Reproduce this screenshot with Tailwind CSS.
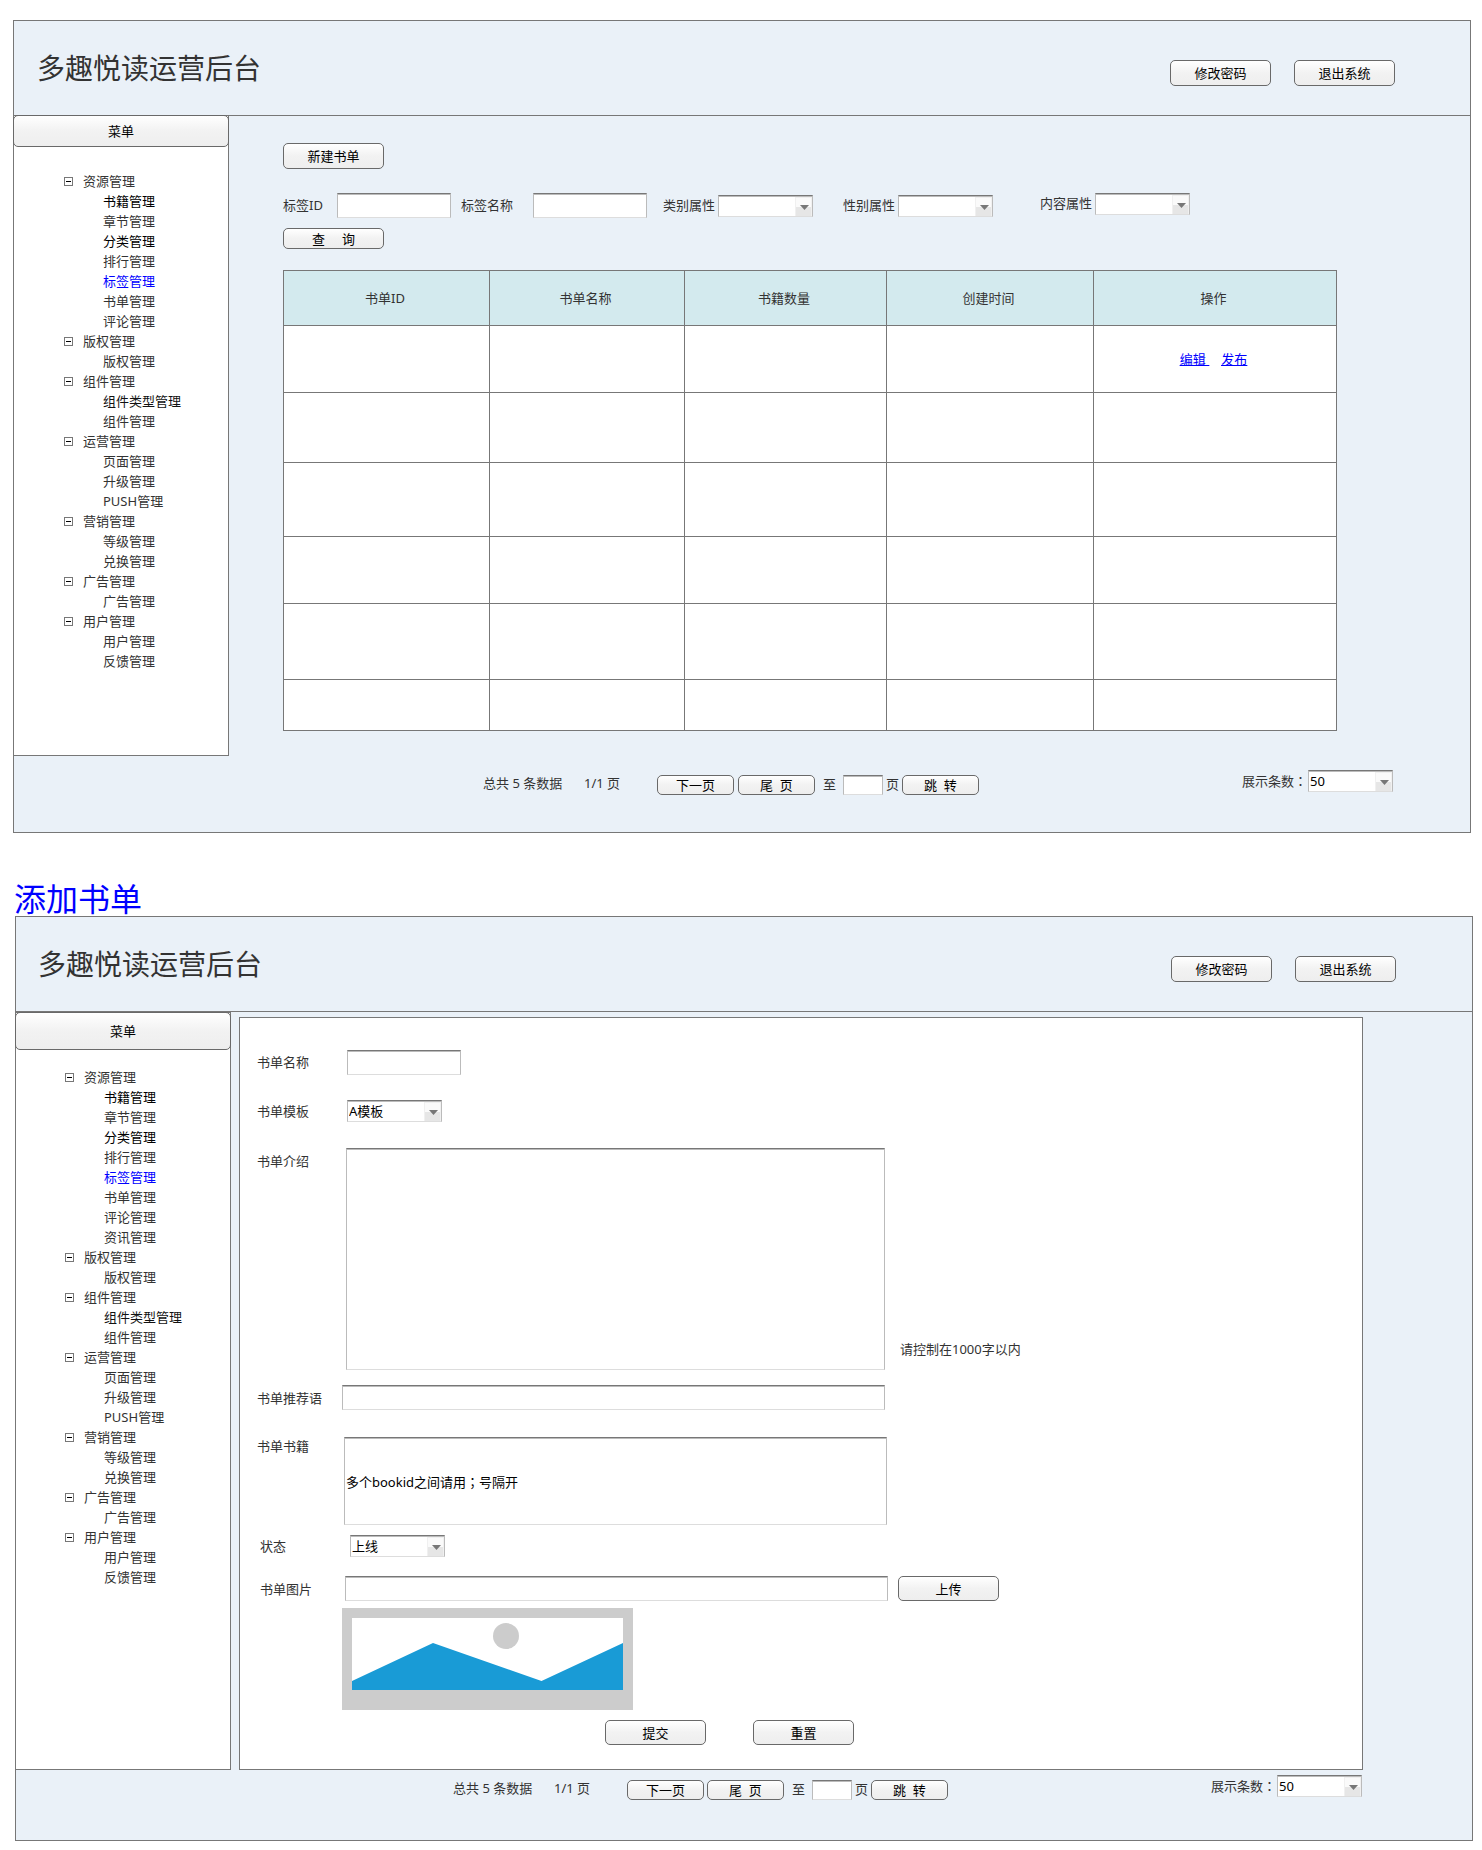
<!DOCTYPE html>
<html lang="zh-CN">
<head>
<meta charset="utf-8">
<meta name="viewport" content="width=device-width, initial-scale=1">
<title>多趣悦读运营后台</title>
<script src="https://cdn.jsdelivr.net/npm/@tailwindcss/browser@4"></script>
</head>
<body class="bg-white pt-5 pb-2 font-['Noto_Sans','Noto_Sans_CJK_SC',sans-serif] text-[13px] leading-5 text-[#333] [&_button]:rounded-[5px] [&_button]:border [&_button]:border-[#696969] [&_button]:bg-linear-to-b [&_button]:from-white [&_button]:via-[#f2f2f2] [&_button]:to-[#eee] [&_button]:whitespace-pre [&_button]:text-black [&_button]:leading-4 [&_:is(input,select,textarea)]:block [&_:is(input,select,textarea)]:appearance-none [&_:is(input,select,textarea)]:rounded-none [&_:is(input,select,textarea)]:border [&_:is(input,select,textarea)]:border-[#bbb] [&_:is(input,select,textarea)]:border-t-[#777] [&_:is(input,select,textarea)]:border-b-[#ddd] [&_:is(input,select,textarea)]:bg-white [&_:is(input,select,textarea)]:px-px [&_:is(input,select,textarea)]:text-black [&_:is(input,select,textarea)]:shadow-[inset_0_1px_0_#bbb]">

<svg class="hidden" aria-hidden="true">
  <symbol id="collapse" viewBox="0 0 9 9"><rect x=".5" y=".5" width="8" height="8" fill="#fff" stroke="#777"/><path d="M2 4.5h5" stroke="#000"/></symbol>
  <symbol id="drop" viewBox="0 0 17 19"><path d="M0 0h17v19H0z" fill="#f0f0f0"/><path d="M1 1h15v9H1z" fill="#fafafa"/><path d="M1 10h15v9H1z" fill="#e6e6e6"/><path d="M5 8h9l-4.500 5z" fill="#777"/></symbol>
</svg>

<section class="mr-[11px] ml-[13px] border border-[#777] bg-[#eaf1f8]">
  <header class="flex h-[95px] justify-between border-b border-[#777] pr-[75px] pl-[23px]">
    <h1 class="self-center text-[28px] leading-9">多趣悦读运营后台</h1>
    <div class="flex gap-[23px] pt-[39px]">
      <button class="h-[26px] w-[101px]">修改密码</button>
      <button class="h-[26px] w-[101px]">退出系统</button>
    </div>
  </header>
  <div class="flex items-start">
    <aside class="-mt-px -ml-px min-h-[641px] w-[216px] shrink-0 border border-[#777] bg-white">
      <button class="-m-px block h-8 w-[216px]">菜单</button>
      <nav class="pt-[25px] pl-[50px] [&_a]:block [&_h2]:flex [&_h2]:items-center [&_h2]:gap-[10px] [&_svg]:size-[9px] [&_ul]:pl-[39px]">
        <h2><svg><use href="#collapse"/></svg>资源管理</h2>
        <ul>
          <li><a href="#" class="text-black">书籍管理</a></li>
          <li><a href="#">章节管理</a></li>
          <li><a href="#" class="text-black">分类管理</a></li>
          <li><a href="#">排行管理</a></li>
          <li><a href="#" class="text-[#00f]">标签管理</a></li>
          <li><a href="#">书单管理</a></li>
          <li><a href="#">评论管理</a></li>
        </ul>
        <h2><svg><use href="#collapse"/></svg>版权管理</h2>
        <ul><li><a href="#">版权管理</a></li></ul>
        <h2><svg><use href="#collapse"/></svg>组件管理</h2>
        <ul>
          <li><a href="#" class="text-[#111]">组件类型管理</a></li>
          <li><a href="#">组件管理</a></li>
        </ul>
        <h2><svg><use href="#collapse"/></svg>运营管理</h2>
        <ul>
          <li><a href="#">页面管理</a></li>
          <li><a href="#">升级管理</a></li>
          <li><a href="#">PUSH管理</a></li>
        </ul>
        <h2><svg><use href="#collapse"/></svg>营销管理</h2>
        <ul>
          <li><a href="#">等级管理</a></li>
          <li><a href="#">兑换管理</a></li>
        </ul>
        <h2><svg><use href="#collapse"/></svg>广告管理</h2>
        <ul><li><a href="#">广告管理</a></li></ul>
        <h2><svg><use href="#collapse"/></svg>用户管理</h2>
        <ul>
          <li><a href="#">用户管理</a></li>
          <li><a href="#">反馈管理</a></li>
        </ul>
      </nav>
    </aside>

    <main class="flex-1 pt-[27px] pr-[77px] pb-[37px] pl-[54px]">
      <button class="block h-[26px] w-[101px]">新建书单</button>
      <form class="mt-6">
        <div class="flex h-[25px] items-center [&_label]:pb-[2px]">
          <label for="tag-id" class="w-[54px]">标签ID</label>
          <input id="tag-id" type="text" class="h-[25px] w-[114px]">
          <label for="tag-name" class="ml-[10px] w-[72px]">标签名称</label>
          <input id="tag-name" type="text" class="h-[25px] w-[114px]">
          <label for="category" class="ml-4 w-[55px]">类别属性</label>
          <div class="relative">
            <select id="category" class="h-[22px] w-[95px]"><option></option></select>
            <svg class="pointer-events-none absolute top-[2px] right-px h-[19px] w-[17px]"><use href="#drop"/></svg>
          </div>
          <label for="gender" class="ml-[30px] w-[55px]">性别属性</label>
          <div class="relative">
            <select id="gender" class="h-[22px] w-[95px]"><option></option></select>
            <svg class="pointer-events-none absolute top-[2px] right-px h-[19px] w-[17px]"><use href="#drop"/></svg>
          </div>
          <div class="ml-[47px] flex items-center self-start">
            <label for="content" class="w-[55px]">内容属性</label>
            <div class="relative">
              <select id="content" class="h-[22px] w-[95px]"><option></option></select>
              <svg class="pointer-events-none absolute top-[2px] right-px h-[19px] w-[17px]"><use href="#drop"/></svg>
            </div>
          </div>
        </div>
        <button type="button" class="mt-[10px] block h-[21px] w-[101px]">查&nbsp;&nbsp;&nbsp;&nbsp;&nbsp;询</button>
      </form>

      <div class="mt-[21px] mr-[56px]">
        <table class="w-full table-fixed border-collapse bg-white text-center [&_:is(td,th)]:border [&_:is(td,th)]:border-[#777]">
          <colgroup><col class="w-[206px]"><col class="w-[195px]"><col class="w-[202px]"><col class="w-[207px]"><col></colgroup>
          <thead>
            <tr class="h-[55px] bg-[#d3eaee] [&>th]:pr-[3px] [&>th]:font-normal"><th>书单ID</th><th>书单名称</th><th>书籍数量</th><th>创建时间</th><th>操作</th></tr>
          </thead>
          <tbody>
            <tr class="h-[67px]"><td></td><td></td><td></td><td></td><td class="pr-[3px]"><div class="flex justify-center gap-3 text-[#00f] underline"><a href="#">编辑&nbsp;</a><a href="#">发布</a></div></td></tr>
            <tr class="h-[70px]"><td></td><td></td><td></td><td></td><td></td></tr>
            <tr class="h-[74px]"><td></td><td></td><td></td><td></td><td></td></tr>
            <tr class="h-[67px]"><td></td><td></td><td></td><td></td><td></td></tr>
            <tr class="h-[76px]"><td></td><td></td><td></td><td></td><td></td></tr>
            <tr class="h-[51px]"><td></td><td></td><td></td><td></td><td></td></tr>
          </tbody>
        </table>
      </div>

      <footer class="mt-[39px] ml-[200px] flex h-[25px] justify-between">
        <div class="flex items-center self-end">
          <p class="flex w-[174px] self-start leading-4"><span class="w-[101px]">总共 5 条数据</span><span>1/1 页</span></p>
          <button class="mr-1 h-5 w-[77px]">下一页</button>
          <button class="mr-2 h-5 w-[77px]">尾&nbsp;&nbsp;页</button>
          <label for="page-a" class="w-5 self-start leading-[18px]">至</label>
          <input id="page-a" type="text" class="mr-[3px] h-5 w-10">
          <span class="w-4 self-start leading-[18px]">页</span>
          <button class="h-5 w-[77px]">跳&nbsp;&nbsp;转</button>
        </div>
        <div class="flex items-center self-start">
          <label for="size-a" class="w-[66px] font-['Noto_Sans_CJK_TC','Noto_Sans_CJK_SC',sans-serif]" lang="zh-TW">展示条数：</label>
          <div class="relative">
            <select id="size-a" class="h-[22px] w-[85px]"><option>50</option></select>
            <svg class="pointer-events-none absolute top-[2px] right-px h-[19px] w-[17px]"><use href="#drop"/></svg>
          </div>
        </div>
      </footer>
    </main>
  </div>
</section>

<h2 class="mt-[49px] ml-[14px] text-[32px] leading-[34px] text-[#00f]">添加书单</h2>

<section class="mr-[9px] ml-[15px] border border-[#777] bg-[#eaf1f8]">
  <header class="flex h-[95px] justify-between border-b border-[#777] pr-[76px] pl-[22px]">
    <h1 class="self-center text-[28px] leading-9">多趣悦读运营后台</h1>
    <div class="flex gap-[23px] pt-[39px]">
      <button class="h-[26px] w-[101px]">修改密码</button>
      <button class="h-[26px] w-[101px]">退出系统</button>
    </div>
  </header>
  <div class="flex items-start">
    <aside class="-ml-px min-h-[758px] w-[216px] shrink-0 border border-[#777] bg-white">
      <button class="-m-px block h-[38px] w-[216px]">菜单</button>
      <nav class="pt-[18px] pl-[49px] [&_a]:block [&_h2]:flex [&_h2]:items-center [&_h2]:gap-[10px] [&_svg]:size-[9px] [&_ul]:pl-[39px]">
        <h2><svg><use href="#collapse"/></svg>资源管理</h2>
        <ul>
          <li><a href="#" class="text-black">书籍管理</a></li>
          <li><a href="#">章节管理</a></li>
          <li><a href="#" class="text-black">分类管理</a></li>
          <li><a href="#">排行管理</a></li>
          <li><a href="#" class="text-[#00f]">标签管理</a></li>
          <li><a href="#">书单管理</a></li>
          <li><a href="#">评论管理</a></li>
          <li><a href="#">资讯管理</a></li>
        </ul>
        <h2><svg><use href="#collapse"/></svg>版权管理</h2>
        <ul><li><a href="#">版权管理</a></li></ul>
        <h2><svg><use href="#collapse"/></svg>组件管理</h2>
        <ul>
          <li><a href="#" class="text-[#111]">组件类型管理</a></li>
          <li><a href="#">组件管理</a></li>
        </ul>
        <h2><svg><use href="#collapse"/></svg>运营管理</h2>
        <ul>
          <li><a href="#">页面管理</a></li>
          <li><a href="#">升级管理</a></li>
          <li><a href="#">PUSH管理</a></li>
        </ul>
        <h2><svg><use href="#collapse"/></svg>营销管理</h2>
        <ul>
          <li><a href="#">等级管理</a></li>
          <li><a href="#">兑换管理</a></li>
        </ul>
        <h2><svg><use href="#collapse"/></svg>广告管理</h2>
        <ul><li><a href="#">广告管理</a></li></ul>
        <h2><svg><use href="#collapse"/></svg>用户管理</h2>
        <ul>
          <li><a href="#">用户管理</a></li>
          <li><a href="#">反馈管理</a></li>
        </ul>
      </nav>
    </aside>

    <main class="flex-1 pt-[5px] pr-[109px] pb-[40px] pl-2">
      <form class="border border-[#777] bg-white pt-8 pb-6 pl-[17px]">
        <div class="flex items-center">
          <label for="list-name" class="w-[90px] pb-[2px]">书单名称</label>
          <input id="list-name" type="text" class="h-[25px] w-[114px]">
        </div>
        <div class="mt-[25px] flex items-center">
          <label for="template" class="w-[90px]">书单模板</label>
          <div class="relative">
            <select id="template" class="h-[22px] w-[95px]"><option>A模板</option></select>
            <svg class="pointer-events-none absolute top-[2px] right-px h-[19px] w-[17px]"><use href="#drop"/></svg>
          </div>
        </div>
        <div class="mt-[26px] flex items-start">
          <label for="intro" class="w-[89px] pt-[3px]">书单介绍</label>
          <textarea id="intro" class="h-[222px] w-[539px] resize-none"></textarea>
          <p class="mb-[11px] ml-[15px] self-end">请控制在1000字以内</p>
        </div>
        <div class="mt-[15px] flex items-center">
          <label for="slogan" class="w-[85px]">书单推荐语</label>
          <input id="slogan" type="text" class="h-[25px] w-[543px]">
        </div>
        <div class="mt-[27px] flex items-start">
          <label for="books" class="w-[87px] leading-[18px]">书单书籍</label>
          <input id="books" type="text" lang="zh-TW" value="多个bookid之间请用；号隔开" class="h-[88px] w-[543px] font-['Noto_Sans','Noto_Sans_CJK_TC','Noto_Sans_CJK_SC',sans-serif]">
        </div>
        <div class="mt-[10px] flex items-center pl-[3px]">
          <label for="status" class="w-[90px]">状态</label>
          <div class="relative">
            <select id="status" class="h-[22px] w-[95px]"><option>上线</option></select>
            <svg class="pointer-events-none absolute top-[2px] right-px h-[19px] w-[17px]"><use href="#drop"/></svg>
          </div>
        </div>
        <div class="mt-[19px] flex items-center pl-[3px]">
          <label for="cover" class="w-[85px]">书单图片</label>
          <input id="cover" type="text" class="h-[25px] w-[543px]">
          <button type="button" class="ml-[10px] h-[25px] w-[101px]">上传</button>
        </div>
        <svg class="mt-[7px] ml-[85px] block h-[102px] w-[291px]" viewBox="0 0 291 102" role="img" aria-label="书单图片">
          <path d="M0 0h291v102H0z" fill="#ccc"/>
          <path d="M10 10h271v72H10z" fill="#fff"/>
          <circle cx="164" cy="28" r="13" fill="#ccc"/>
          <path d="M10 73l81-38 108.500 38L281 35v47H10z" fill="#199bd6"/>
        </svg>
        <div class="mt-[10px] ml-[348px] flex gap-[47px]">
          <button type="button" class="h-[25px] w-[101px]">提交</button>
          <button type="button" class="h-[25px] w-[101px]">重置</button>
        </div>
      </form>

      <footer class="mt-[5px] mr-px ml-[214px] flex h-[25px] justify-between">
        <div class="flex items-center self-end">
          <p class="flex w-[174px] self-start leading-4"><span class="w-[101px]">总共 5 条数据</span><span>1/1 页</span></p>
          <button class="mr-[3px] h-5 w-[77px]">下一页</button>
          <button class="mr-2 h-5 w-[77px]">尾&nbsp;&nbsp;页</button>
          <label for="page-b" class="w-5 self-start leading-[18px]">至</label>
          <input id="page-b" type="text" class="mr-[3px] h-5 w-10">
          <span class="w-4 self-start leading-[18px]">页</span>
          <button class="h-5 w-[77px]">跳&nbsp;&nbsp;转</button>
        </div>
        <div class="flex items-center self-start">
          <label for="size-b" class="w-[66px] font-['Noto_Sans_CJK_TC','Noto_Sans_CJK_SC',sans-serif]" lang="zh-TW">展示条数：</label>
          <div class="relative">
            <select id="size-b" class="h-[22px] w-[85px]"><option>50</option></select>
            <svg class="pointer-events-none absolute top-[2px] right-px h-[19px] w-[17px]"><use href="#drop"/></svg>
          </div>
        </div>
      </footer>
    </main>
  </div>
</section>
</body>
</html>
